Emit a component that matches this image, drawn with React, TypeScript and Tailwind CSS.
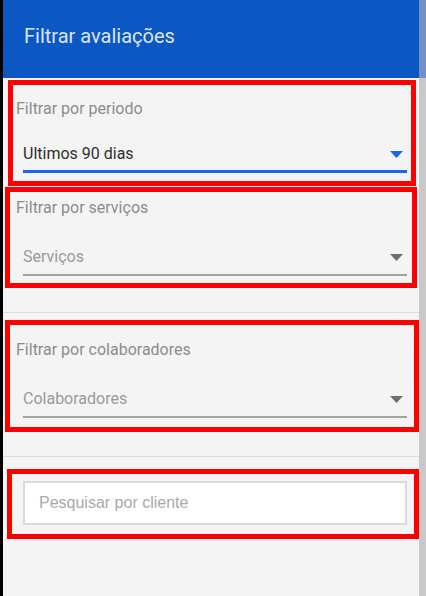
import React from 'react';

const roboto = { fontFamily: 'Roboto, "Liberation Sans", sans-serif' };

function Caret({ color }: { color: string }) {
  return (
    <svg width="13" height="7" viewBox="0 0 13 7" className="shrink-0">
      <path d="M0 0 L13 0 L6.5 7 Z" fill={color} />
    </svg>
  );
}

export default function App() {
  return (
    <div className="flex h-[596px] w-[426px] overflow-hidden bg-[#f4f4f4]" style={roboto}>
      {/* left edge */}
      <div className="w-[3px] shrink-0 bg-black" />

      {/* panel */}
      <div className="flex flex-1 flex-col">
        {/* Header */}
        <div className="h-[78px] shrink-0 bg-[#0b57c4] pl-[21px] pt-[24px]">
          <h1 className="text-[20px] leading-[24px] text-[#dde5f4]">Filtrar avaliações</h1>
        </div>

        {/* Periodo */}
        <div className="mt-[2px] ml-[5px] mr-[3px] h-[106px] border-[5px] border-[#ff0000] pt-[14px]">
          <div className="pl-[3px] text-[16px] leading-[20px] text-[#8c8c8c]">Filtrar por periodo</div>
          <div className="mt-[25px] ml-[10px] mr-[4px] flex items-center justify-between border-b-[3px] border-[#1d63f2] pb-[6px] pr-[4px]">
            <span className="text-[16px] leading-[20px] text-[#2e2e2e]">Ultimos 90 dias</span>
            <Caret color="#1d63f2" />
          </div>
        </div>

        {/* Servicos */}
        <div className="mt-[1px] ml-[2px] mr-[2px] h-[101px] border-[5px] border-[#ff0000] pt-[6px]">
          <div className="pl-[6px] text-[16px] leading-[20px] text-[#8c8c8c]">Filtrar por serviços</div>
          <div className="mt-[29px] ml-[13px] mr-[5px] flex items-center justify-between border-b-2 border-[#a3a3a3] pb-[7px] pr-[4px]">
            <span className="text-[16px] leading-[20px] text-[#9a9a9a]">Serviços</span>
            <Caret color="#6e6e6e" />
          </div>
        </div>

        <div className="mt-[24px] h-px bg-[#dcdcdc]" />

        {/* Colaboradores */}
        <div className="mt-[7px] ml-[2px] h-[112px] border-[5px] border-[#ff0000] pt-[15px]">
          <div className="pl-[6px] text-[16px] leading-[20px] text-[#8c8c8c]">Filtrar por colaboradores</div>
          <div className="mt-[29px] ml-[13px] mr-[7px] flex items-center justify-between border-b-2 border-[#a3a3a3] pb-[7px] pr-[4px]">
            <span className="text-[16px] leading-[20px] text-[#9a9a9a]">Colaboradores</span>
            <Caret color="#6e6e6e" />
          </div>
        </div>

        <div className="mt-[24px] h-px bg-[#dcdcdc]" />

        {/* Cliente */}
        <div className="mt-[12px] ml-[4px] h-[70px] border-[5px] border-[#ff0000] pt-[7px]">
          <input
            type="text"
            placeholder="Pesquisar por cliente"
            className="ml-[11px] block h-[44px] w-[384px] border-2 border-[#dadada] bg-white pl-[14px] text-[16px] text-[#333] outline-none placeholder:text-[#a9a9a9]"
            style={{ fontFamily: '"Liberation Sans", Arial, sans-serif' }}
          />
        </div>
      </div>

      {/* scrollbar */}
      <div className="flex w-[7px] shrink-0 flex-col">
        <div className="h-[78px] bg-[#7391c4]" />
        <div className="flex-1 bg-[#c9c9c9]" />
      </div>
    </div>
  );
}
